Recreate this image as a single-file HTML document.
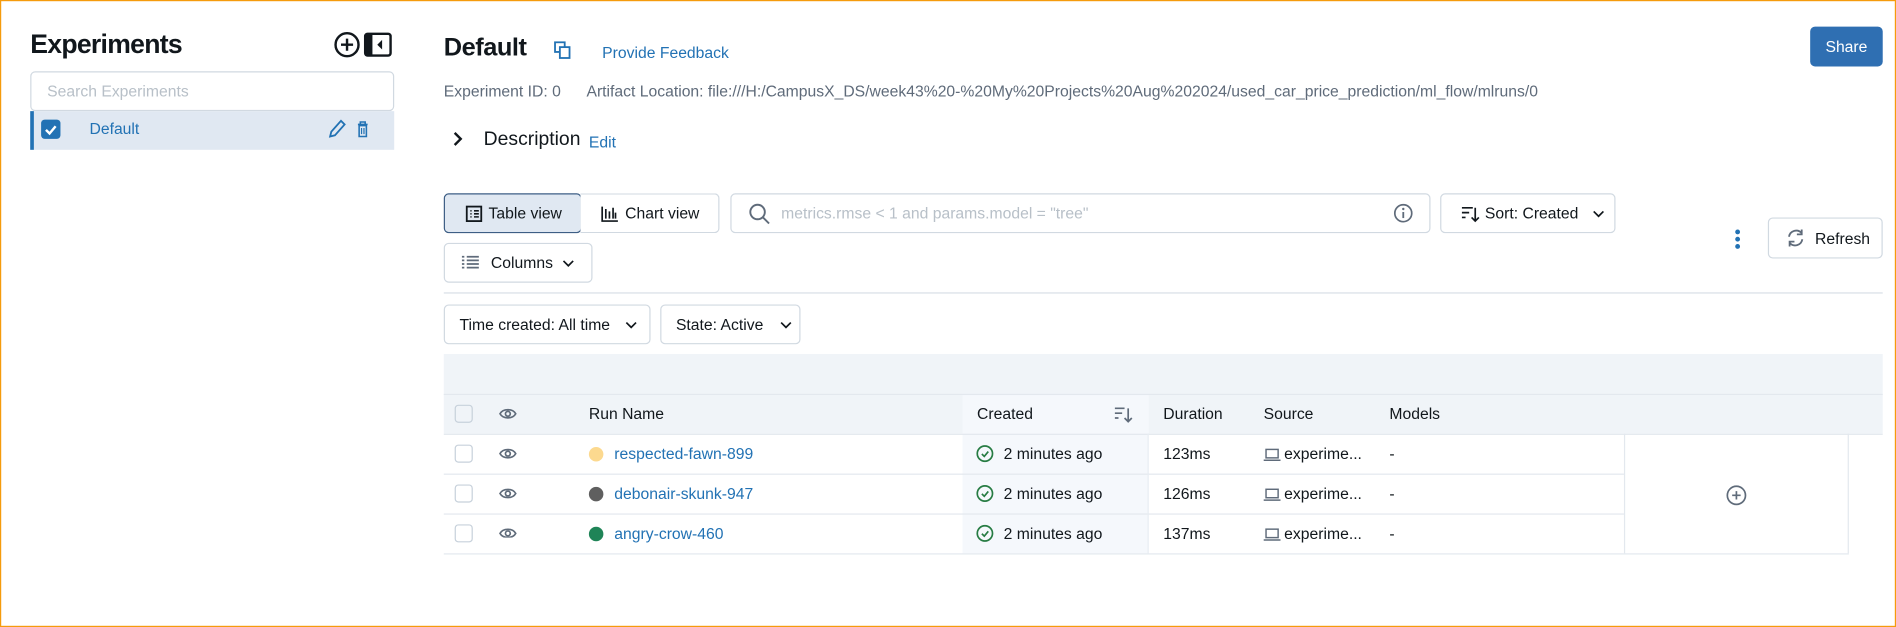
<!DOCTYPE html>
<html><head><meta charset="utf-8"><style>
html,body{margin:0;padding:0;background:#fff;overflow:hidden}
body{width:1896px;height:627px;position:relative}
#w{position:absolute;left:0;top:0;width:1568px;height:519px;transform:scale(1.2092,1.2081);transform-origin:0 0;font-family:"Liberation Sans",sans-serif;color:#11171c;font-size:13px}
.a{position:absolute}
.brd{position:absolute;left:0;top:0;width:1566px;height:517px;border:1px solid #f59b0c}
.btn{position:absolute;border:1px solid #d1d9e1;border-radius:4px;background:#fff;box-sizing:border-box;display:flex;align-items:center;font-size:13px;color:#11171c}
.blue{color:#2272b4}
.cb{position:absolute;width:15px;height:15px;border:1px solid #c7d1db;border-radius:3px;box-sizing:border-box;background:#fff}
.line{position:absolute;height:1px;background:#e3e8ee}
</style></head><body><div id="w">
<div class="brd"></div>
<!-- sidebar -->
<div class="a" style="left:25px;top:24px;font-size:22px;font-weight:bold;letter-spacing:-.6px">Experiments</div>
<svg class="a" style="left:276px;top:26px" width="50" height="22" viewBox="0 0 50 22"><circle cx="11" cy="11" r="9.5" fill="none" stroke="#11171c" stroke-width="2"/><path d="M11 6v10M6 11h10" stroke="#11171c" stroke-width="2"/><rect x="26" y="2" width="21" height="18" rx="2" fill="none" stroke="#11171c" stroke-width="2"/><rect x="26" y="2" width="6" height="18" fill="#11171c"/><path d="M40 7l-4 4 4 4z" fill="#11171c"/></svg>
<div class="btn" style="left:25px;top:59px;width:301px;height:33px;padding-left:13px;color:#b8c0c8">Search Experiments</div>
<div class="a" style="left:25px;top:92px;width:301px;height:32px;background:#e0e8f2"></div>
<div class="a" style="left:25px;top:92px;width:3px;height:32px;background:#2272b4"></div>
<div class="a" style="left:34px;top:99px;width:16px;height:16px;border-radius:3px;background:#2272b4"></div>
<svg class="a" style="left:34px;top:99px" width="16" height="16"><path d="M4 8.5l3 3 5-6" stroke="#fff" stroke-width="2" fill="none"/></svg>
<div class="a blue" style="left:74px;top:99px">Default</div>
<svg class="a" style="left:270px;top:98px" width="40" height="18"><path d="M3 15l1-4 8-9 3 3-8 9z" fill="none" stroke="#2272b4" stroke-width="1.5"/><path d="M26 5h8M28 5V3h4v2M27 6h6v9h-6z" fill="none" stroke="#2272b4" stroke-width="1.3"/><path d="M29 8v5M31 8v5" stroke="#2272b4"/></svg>
<!-- header -->
<div class="a" style="left:367px;top:28px;font-size:21px;font-weight:bold;letter-spacing:-.4px">Default</div>
<svg class="a" style="left:458px;top:34px" width="14" height="15"><rect x="1" y="1" width="8" height="8" fill="none" stroke="#2272b4" stroke-width="1.5"/><rect x="5" y="5" width="8" height="9" fill="#fff" stroke="#2272b4" stroke-width="1.5"/></svg>
<div class="a blue" style="left:498px;top:36px">Provide Feedback</div>
<div class="a" style="left:1497px;top:22px;width:60px;height:33px;background:#2f6fb2;border-radius:4px;color:#fff;display:flex;align-items:center;justify-content:center">Share</div>
<div class="a" style="left:367px;top:68px;color:#5f6b7a">Experiment ID: 0</div>
<div class="a" style="left:485px;top:68px;color:#5f6b7a">Artifact Location: file:///H:/CampusX_DS/week43%20-%20My%20Projects%20Aug%202024/used_car_price_prediction/ml_flow/mlruns/0</div>
<svg class="a" style="left:373px;top:108px" width="10" height="14"><path d="M3 2l5 5-5 5" stroke="#11171c" stroke-width="2" fill="none"/></svg>
<div class="a" style="left:400px;top:107px;font-size:16px">Description</div>
<div class="a blue" style="left:487px;top:110px">Edit</div>
<!-- toolbar -->
<div class="btn" style="left:367px;top:160px;width:114px;height:33px;background:#e0e8f2;border-color:#3d5e85;padding-left:17px"><svg width="14" height="14" style="margin-right:5px"><rect x="1" y="1" width="12" height="12" fill="none" stroke="#11171c" stroke-width="1.5"/><path d="M4 4.5h1M4 7h1M4 9.5h1M7 4.5h4M7 7h4M7 9.5h4" stroke="#11171c" stroke-width="1.3"/></svg>Table view</div>
<div class="btn" style="left:480px;top:160px;width:115px;height:33px;padding-left:17px;border-left:none;border-radius:0 4px 4px 0"><svg width="15" height="14" style="margin-right:5px"><path d="M1 1v12h13M4 3v8M7 5v6M10 2v9M12 6v5" stroke="#11171c" stroke-width="1.4" fill="none"/></svg>Chart view</div>
<div class="btn" style="left:604px;top:160px;width:579px;height:33px;padding-left:14px;color:#b8c0c8"><svg width="18" height="18" style="margin-right:9px"><circle cx="7.5" cy="7.5" r="6" fill="none" stroke="#5f6b7a" stroke-width="1.6"/><path d="M12 12l5 5" stroke="#5f6b7a" stroke-width="1.6"/></svg>metrics.rmse &lt; 1 and params.model = "tree"</div>
<svg class="a" style="left:1152px;top:168px" width="17" height="17"><circle cx="8.5" cy="8.5" r="7" fill="none" stroke="#5f6b7a" stroke-width="1.4"/><path d="M8.5 7.5v5" stroke="#5f6b7a" stroke-width="1.5"/><circle cx="8.5" cy="5" r="1" fill="#5f6b7a"/></svg>
<div class="btn" style="left:1191px;top:160px;width:145px;height:33px;padding-left:16px"><svg width="16" height="16" style="margin-right:4px"><path d="M1 3h9M1 7h6M1 11h3M12 3v11M9 11l3 3 3-3" stroke="#11171c" stroke-width="1.4" fill="none"/></svg>Sort: Created<svg width="10" height="6" style="margin-left:12px"><path d="M1 1l4 4 4-4" stroke="#11171c" stroke-width="1.4" fill="none"/></svg></div>
<div class="btn" style="left:367px;top:201px;width:123px;height:33px;padding-left:13px"><svg width="16" height="13" style="margin-right:9px"><path d="M1 1.5h2M5 1.5h10M1 4.5h2M5 4.5h10M1 7.5h2M5 7.5h10M1 10.5h2M5 10.5h10" stroke="#5f6b7a" stroke-width="1.4"/></svg>Columns<svg width="10" height="6" style="margin-left:8px"><path d="M1 1l4 4 4-4" stroke="#11171c" stroke-width="1.4" fill="none"/></svg></div>
<svg class="a" style="left:1434px;top:189px" width="6" height="18"><circle cx="3" cy="3" r="2" fill="#2272b4"/><circle cx="3" cy="9" r="2" fill="#2272b4"/><circle cx="3" cy="15" r="2" fill="#2272b4"/></svg>
<div class="btn" style="left:1462px;top:180px;width:95px;height:34px;padding-left:14px"><svg width="16" height="16" style="margin-right:8px"><path d="M2.5 7A6 6 0 0 1 13 4M13.5 9A6 6 0 0 1 3 12" stroke="#5f6b7a" stroke-width="1.5" fill="none"/><path d="M13 1v4h-4M3 15v-4h4" stroke="#5f6b7a" stroke-width="1.5" fill="none"/></svg>Refresh</div>
<div class="line" style="left:367px;top:242px;width:1190px;background:#d8dfe6"></div>
<div class="btn" style="left:367px;top:252px;width:171px;height:33px;padding-left:12px">Time created: All time<svg width="10" height="6" style="margin-left:12px"><path d="M1 1l4 4 4-4" stroke="#11171c" stroke-width="1.4" fill="none"/></svg></div>
<div class="btn" style="left:546px;top:252px;width:116px;height:33px;padding-left:12px">State: Active<svg width="10" height="6" style="margin-left:14px"><path d="M1 1l4 4 4-4" stroke="#11171c" stroke-width="1.4" fill="none"/></svg></div>
<!-- table -->
<div class="a" style="left:367px;top:293px;width:1190px;height:66px;background:#f0f4f8"></div>
<div class="a" style="left:796px;top:326px;width:154px;height:132px;background:#f5f8fc"></div>
<div class="line" style="left:367px;top:326px;width:1190px"></div>
<div class="line" style="left:367px;top:359px;width:1190px"></div>
<div class="line" style="left:367px;top:392px;width:976px"></div>
<div class="line" style="left:367px;top:425px;width:976px"></div>
<div class="line" style="left:367px;top:458px;width:1162px"></div>
<div class="a" style="left:949px;top:359px;width:1px;height:99px;background:#e8edf2"></div>
<div class="a" style="left:1343px;top:359px;width:1px;height:99px;background:#e3e8ee"></div>
<div class="a" style="left:1528px;top:359px;width:1px;height:99px;background:#e3e8ee"></div>
<div class="cb" style="left:376px;top:335px;background:#f0f4f8"></div>
<div class="a" style="left:487px;top:335px">Run Name</div>
<div class="a" style="left:808px;top:335px">Created</div>
<svg class="a" style="left:921px;top:335px" width="16" height="16"><path d="M1 3h8M1 7h6M1 11h3M12 3v11M9 11l3 3 3-3" stroke="#5f6b7a" stroke-width="1.4" fill="none"/></svg>
<div class="a" style="left:962px;top:335px">Duration</div>
<div class="a" style="left:1045px;top:335px">Source</div>
<div class="a" style="left:1149px;top:335px">Models</div>
<svg class="a" style="left:412px;top:335px" width="16" height="110"><g fill="none" stroke="#5f6b7a" stroke-width="1.4"><g id="e"><path d="M1.5 7.5C4 3 12 3 14.5 7.5 12 12 4 12 1.5 7.5z"/><circle cx="8" cy="7.5" r="2"/></g><use href="#e" y="33"/><use href="#e" y="66"/><use href="#e" y="99"/></g></svg>
<!-- rows -->
<div class="cb" style="left:376px;top:368px"></div>
<div class="cb" style="left:376px;top:401px"></div>
<div class="cb" style="left:376px;top:434px"></div>
<div class="a" style="left:487px;top:370px;width:12px;height:12px;border-radius:50%;background:#fcd98f"></div>
<div class="a" style="left:487px;top:403px;width:12px;height:12px;border-radius:50%;background:#5f5f5f"></div>
<div class="a" style="left:487px;top:436px;width:12px;height:12px;border-radius:50%;background:#1f8457"></div>
<div class="a blue" style="left:508px;top:368px">respected-fawn-899</div>
<div class="a blue" style="left:508px;top:401px">debonair-skunk-947</div>
<div class="a blue" style="left:508px;top:434px">angry-crow-460</div>
<svg class="a" style="left:807px;top:368px" width="16" height="82"><g fill="none" stroke="#277c43" stroke-width="1.4"><g id="c"><circle cx="7.5" cy="7.5" r="6.3"/><path d="M5 7.8l2 2 3.3-4"/></g><use href="#c" y="33"/><use href="#c" y="66"/></g></svg>
<div class="a" style="left:830px;top:368px">2 minutes ago</div>
<div class="a" style="left:830px;top:401px">2 minutes ago</div>
<div class="a" style="left:830px;top:434px">2 minutes ago</div>
<div class="a" style="left:962px;top:368px">123ms</div>
<div class="a" style="left:962px;top:401px">126ms</div>
<div class="a" style="left:962px;top:434px">137ms</div>
<svg class="a" style="left:1045px;top:371px" width="14" height="80"><g fill="none" stroke="#5f6b7a" stroke-width="1.2"><g id="l"><rect x="2" y="1" width="10" height="7"/><path d="M0 10h14"/></g><use href="#l" y="33"/><use href="#l" y="66"/></g></svg>
<div class="a" style="left:1062px;top:368px">experime...</div>
<div class="a" style="left:1062px;top:401px">experime...</div>
<div class="a" style="left:1062px;top:434px">experime...</div>
<div class="a" style="left:1149px;top:368px">-</div>
<div class="a" style="left:1149px;top:401px">-</div>
<div class="a" style="left:1149px;top:434px">-</div>
<svg class="a" style="left:1427px;top:401px" width="18" height="18"><circle cx="9" cy="9" r="7.5" fill="none" stroke="#5f6b7a" stroke-width="1.4"/><path d="M9 5.5v7M5.5 9h7" stroke="#5f6b7a" stroke-width="1.4"/></svg>
</div></body></html>
